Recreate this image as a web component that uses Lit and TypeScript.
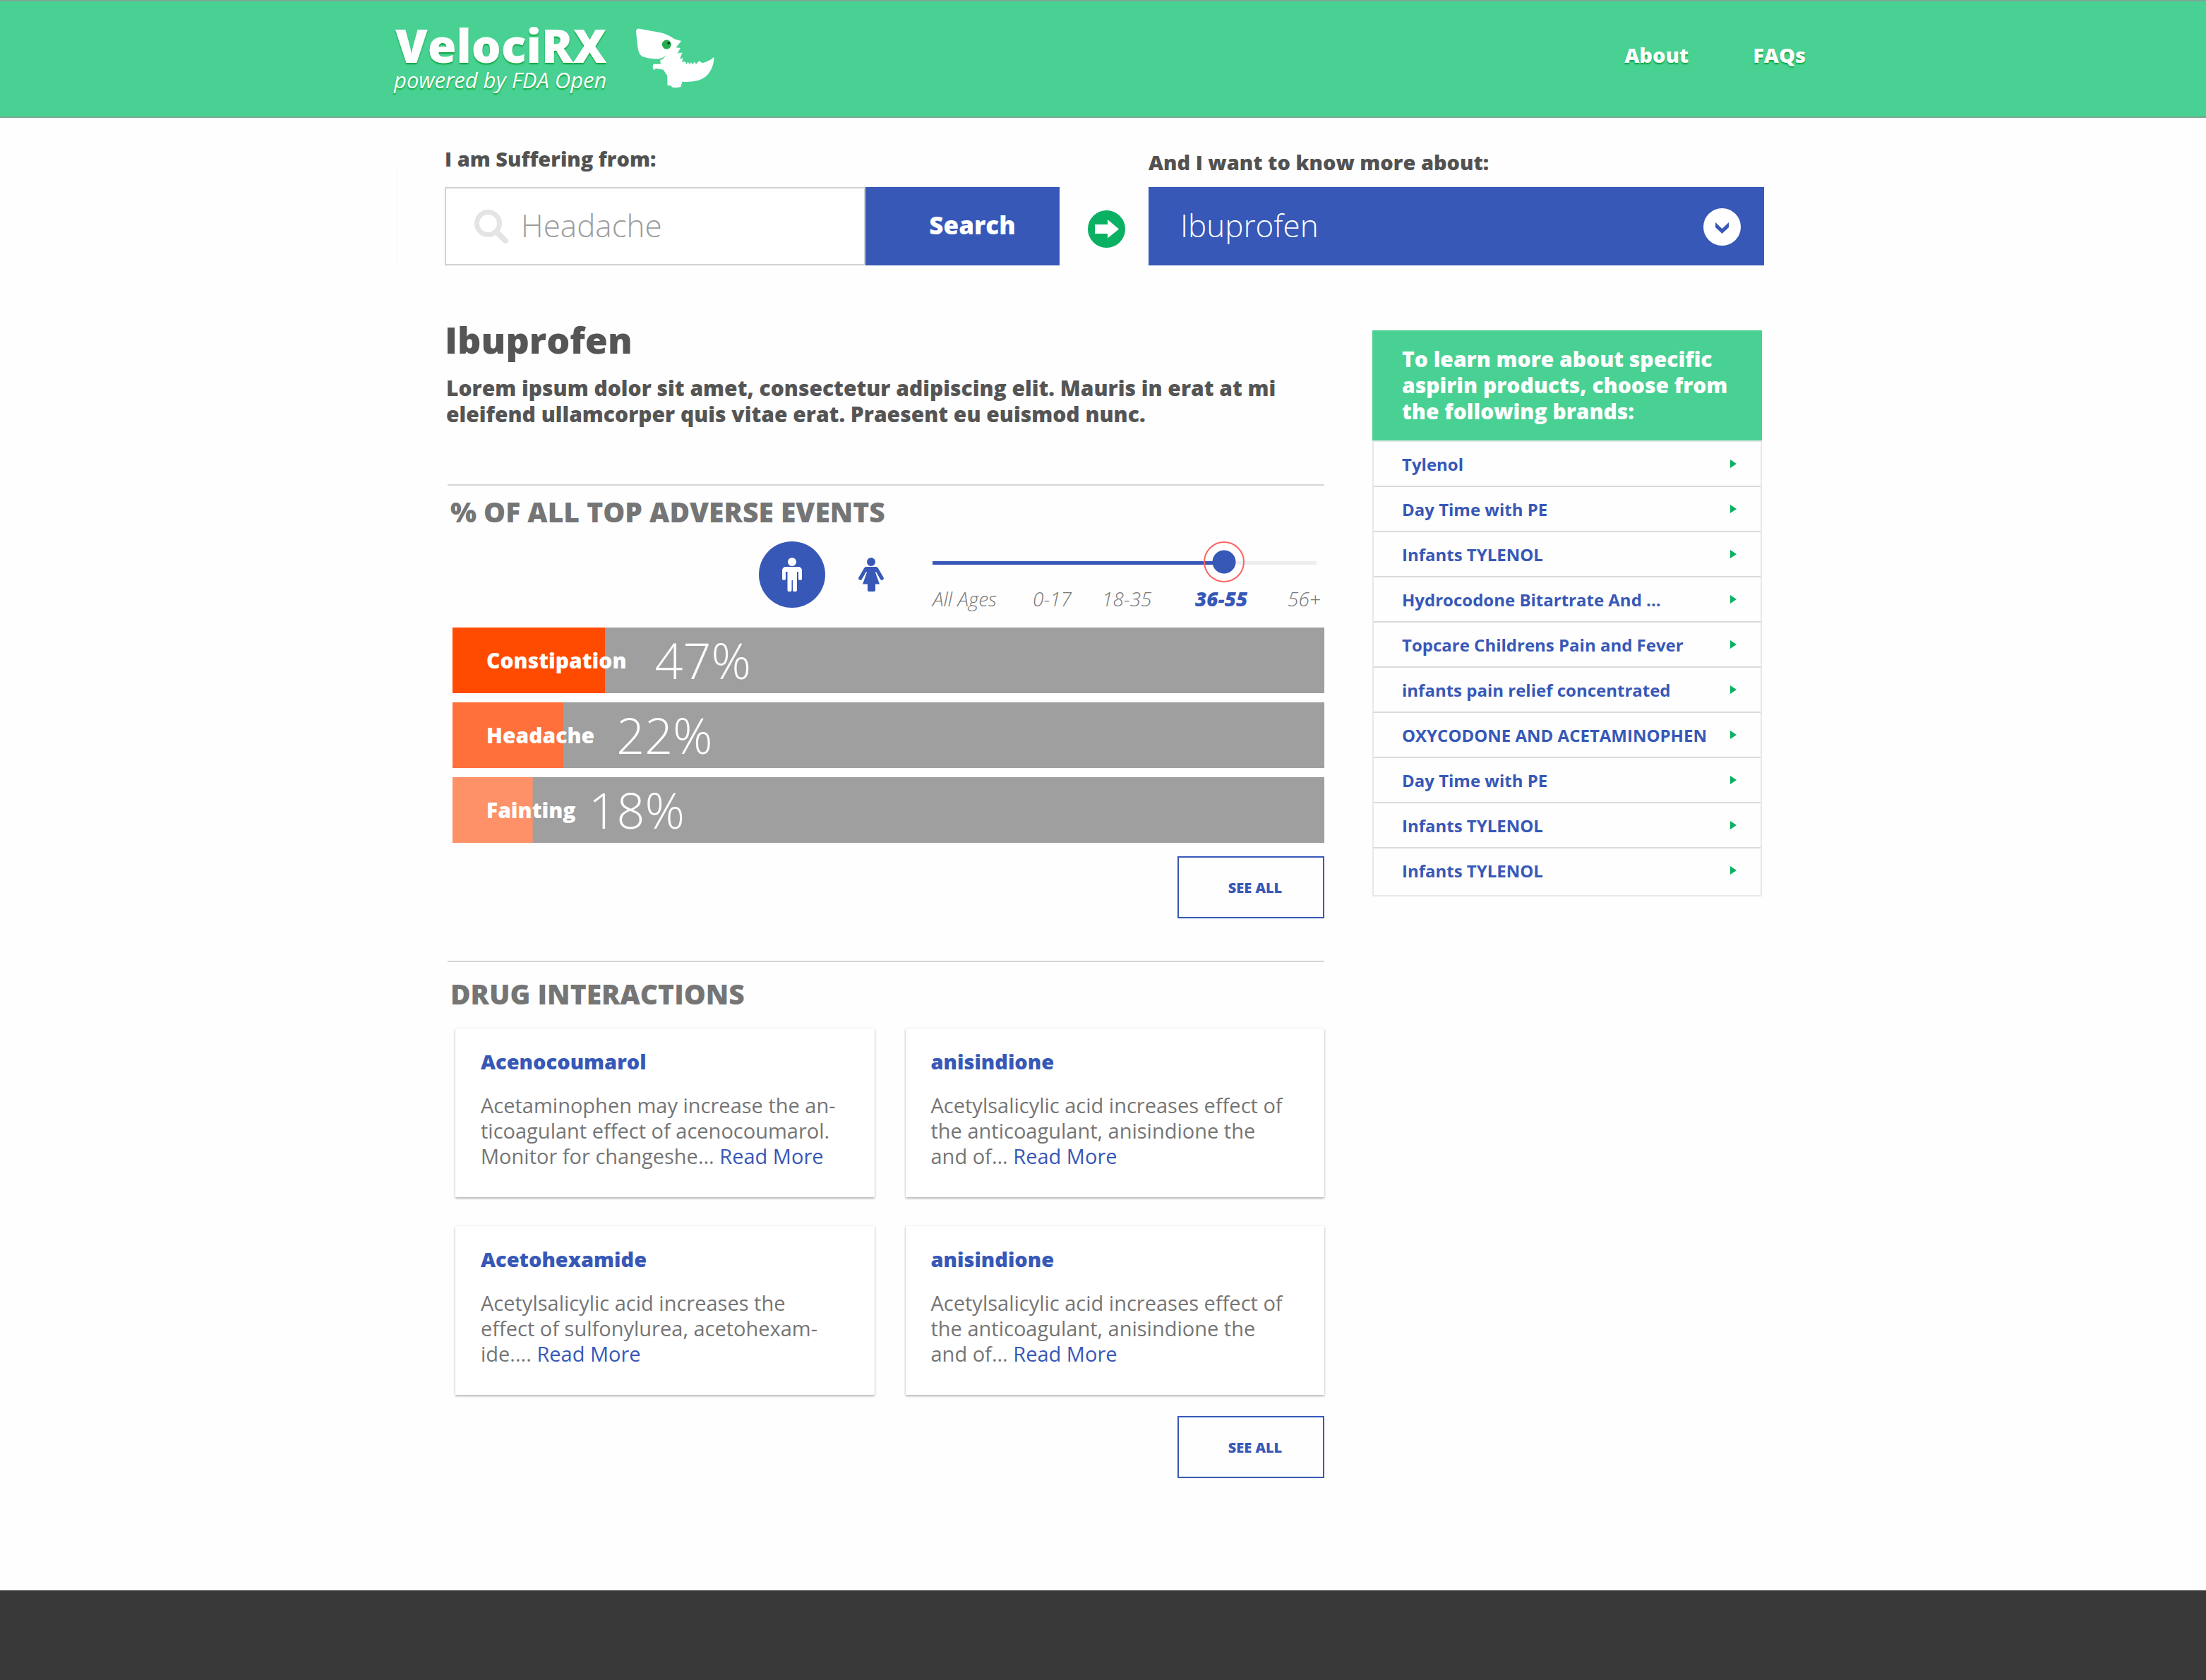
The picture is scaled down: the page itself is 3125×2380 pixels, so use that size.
import { LitElement, html, css, svg } from "lit";
import { customElement, state } from "lit/decorators.js";
import { styleMap } from "lit/directives/style-map.js";

interface AdverseEvent {
  name: string;
  percent: string;
  fill: string;
  valueAt: string;
  color: string;
}

interface Interaction {
  drug: string;
  lines: string[];
}

const EVENTS: AdverseEvent[] = [
  { name: "Constipation", percent: "47%", fill: "17.5%", valueAt: "23.2%", color: "#ff4b00" },
  { name: "Headache", percent: "22%", fill: "12.7%", valueAt: "18.8%", color: "#ff703b" },
  { name: "Fainting", percent: "18%", fill: "9.2%", valueAt: "15.6%", color: "#ff9168" },
];

const INTERACTIONS: Interaction[] = [
  {
    drug: "Acenocoumarol",
    lines: ["Acetaminophen may increase the an-", "ticoagulant effect of acenocoumarol.", "Monitor for changeshe..."],
  },
  {
    drug: "anisindione",
    lines: ["Acetylsalicylic acid increases effect of", "the anticoagulant, anisindione the", "and of..."],
  },
  {
    drug: "Acetohexamide",
    lines: ["Acetylsalicylic acid increases the", "effect of sulfonylurea, acetohexam-", "ide...."],
  },
  {
    drug: "anisindione",
    lines: ["Acetylsalicylic acid increases effect of", "the anticoagulant, anisindione the", "and of..."],
  },
];

const BRANDS = [
  "Tylenol",
  "Day Time with PE",
  "Infants TYLENOL",
  "Hydrocodone Bitartrate And ...",
  "Topcare Childrens Pain and Fever",
  "infants pain relief concentrated",
  "OXYCODONE AND ACETAMINOPHEN",
  "Day Time with PE",
  "Infants TYLENOL",
  "Infants TYLENOL",
];

const AGES = ["All Ages", "0-17", "18-35", "36-55", "56+"];

const raptor = svg`
  <path fill="#fff" d="M1113 132 Q1115 119 1126 120 L1215 136 Q1250 144 1278 165 L1306 172
    L1283 200 L1302 202 L1290 225 L1310 222 L1300 248 L1313 246 L1309 262 L1322 260 L1329 272
    L1333 262 L1344 273 L1346 262 L1355 273 L1361 261 L1370 271 L1381 258 L1397 266
    Q1425 259 1446 241 Q1443 300 1404 329 Q1370 350 1310 346 L1304 368 Q1285 374 1266 369
    L1263 363 L1247 362 L1246 320 L1229 295 L1196 290 L1190 297 Q1180 287 1187 271 L1218 271
    L1216 254 Q1232 250 1239 235 Q1223 250 1198 249 Q1160 247 1138 238 Q1122 226 1119 190 Z"/>
  <circle cx="1243.500" cy="187.500" r="19.500" fill="#22ad4b"/>
  <circle cx="1252" cy="182" r="5" fill="#222"/>`;

const man = svg`
  <circle cx="14" cy="6" r="6"/>
  <path d="M5 13h18a5 5 0 0 1 5 5v11.500a2.500 2.500 0 0 1-5 0V20h-2v25.500a3 3 0 0 1-6 0V32h-1.500v13.500a3 3 0 0 1-6 0V20H5v9.500a2.500 2.500 0 0 1-5 0V18a5 5 0 0 1 5-5z"/>`;

const woman = svg`
  <circle cx="18" cy="6" r="6"/>
  <path d="M11 13h14q2 0 3 2l7.500 13a2.500 2.500 0 0 1-4.500 2.500L25 20l-1 1 6 16.500h-6V46a2 2 0 0 1-2 2h-7a2 2 0 0 1-2-2v-8.500H6L12 21l-1-1-6 10.500A2.500 2.500 0 0 1 .5 28L8 15q1-2 3-2z"/>`;

@customElement("app-root")
export class AppRoot extends LitElement {
  @state() private sex = "male";
  @state() private age = 79;

  static styles = css`
    :host {
      --blue: #3758b7;
      --green: #49d193;
      --rule: #d4d5d6;
      display: flex;
      flex-direction: column;
      min-height: 100vh;
      background: #fefefe;
      color: #555;
      font-family: "Open Sans", sans-serif;
      font-size: 30px;
    }
    * { box-sizing: border-box; }
    h1, h2, h3, p, ul { margin: 0; padding: 0; }
    ul { list-style: none; }
    a { color: inherit; text-decoration: none; }
    button, input, select { font-family: inherit; margin: 0; border: 0; border-radius: 0; }
    svg { display: block; flex: none; }

    .header {
      background: var(--green);
      border: solid #79a792;
      border-width: 2px 0;
    }
    .bar {
      display: flex;
      align-items: flex-start;
      max-width: 2009px;
      min-height: 163px;
      margin: 0 auto;
      padding: 28px 9px 0 0;
      color: #fff;
      text-shadow: 0 2px 2px #0ca53a;
    }
    .brand { display: flex; flex-direction: column; align-items: flex-end; }
    .name { font-size: 66px; line-height: 66px; font-weight: 800; }
    .tag { font-size: 31px; line-height: 34px; font-style: italic; }
    .raptor { width: 111px; height: 85px; margin: 10px 0 0 42px; }
    .nav { display: flex; gap: 91px; margin: 28px 0 0 auto; font-size: 29px; line-height: 40px; font-weight: 800; }

    .main {
      width: 100%;
      max-width: 2009px;
      margin: 0 auto;
      padding-bottom: 159px;
    }
    .search {
      display: grid;
      grid-template-columns: minmax(0, 871fr) 126px minmax(0, 872fr);
      align-items: end;
      margin-left: 4px;
      padding: 38px 68px 0;
      background: linear-gradient(#f6f6f6, #f6f6f6) no-repeat left bottom / 1px 147px;
    }
    .label { display: block; margin-bottom: 20px; font-size: 29px; line-height: 40px; font-weight: 800; color: #525252; }
    .label.low { margin-bottom: 15px; }
    .form { display: flex; height: 111px; }
    .box {
      display: flex;
      flex: 1;
      align-items: center;
      gap: 18px;
      min-width: 0;
      padding-left: 40px;
      border: 2px solid #d0d1d2;
      background: #fff;
    }
    .term {
      flex: 1;
      min-width: 0;
      height: 100%;
      padding: 0 0 4px;
      background: none;
      color: #9c9c9c;
      font-size: 44px;
      font-weight: 300;
    }
    .go {
      width: 275px;
      padding: 0 0 4px 28px;
      background: var(--blue);
      color: #fff;
      font-size: 35px;
      font-weight: 800;
    }
    .arrow { margin: 0 33px 25px 40px; }
    .picker { position: relative; }
    .drug {
      display: block;
      width: 100%;
      height: 111px;
      padding: 0 100px 4px 45px;
      appearance: none;
      background: var(--blue);
      color: #fff;
      font-size: 44px;
      font-weight: 300;
    }
    .chevron { position: absolute; top: 30px; right: 33px; pointer-events: none; }

    .columns {
      display: grid;
      grid-template-columns: minmax(0, 1fr) 552px;
      align-items: start;
      gap: 68px;
      margin-top: 75px;
      padding: 0 71px 0 72px;
    }
    .title { font-size: 52px; line-height: 60px; font-weight: 800; }
    .intro { margin-top: 20px; padding-left: 2px; line-height: 37px; font-weight: 800; }
    .section { margin-left: 4px; border-top: 2px solid var(--rule); }
    .events { margin-top: 81px; padding-top: 17px; }
    .drugs { margin-top: 60px; padding-top: 25px; }
    .heading { padding-left: 4px; font-size: 39px; line-height: 40px; font-weight: 800; color: #757575; }

    .filters { display: flex; justify-content: flex-end; align-items: flex-start; margin: 22px 0 25px; }
    .sexes { display: flex; gap: 18px; margin-right: 40px; }
    .sex {
      display: grid;
      place-items: center;
      width: 94px;
      height: 94px;
      padding: 0;
      border-radius: 50%;
      background: none;
      color: var(--blue);
      fill: currentColor;
    }
    .sex[aria-pressed="true"] { background: var(--blue); color: #fff; }
    .ages { width: 555px; }
    .range {
      display: block;
      width: 544px;
      height: 58px;
      appearance: none;
      background:
        linear-gradient(var(--blue), var(--blue)) no-repeat 0 28px / 76% 5px,
        linear-gradient(#eceef0, #eceef0) no-repeat 0 28px / 100% 5px;
    }
    .range::-webkit-slider-runnable-track { height: 58px; }
    .range::-webkit-slider-thumb {
      appearance: none;
      width: 58px;
      height: 58px;
      border: 2px solid #ff6464;
      border-radius: 50%;
      background: radial-gradient(circle, var(--blue) 16px, transparent 17px);
    }
    .marks {
      display: grid;
      grid-template-columns: 142fr 98fr 132fr 131fr 52fr;
      margin-top: 7px;
      font-size: 28px;
      line-height: 32px;
      font-style: italic;
      font-weight: 300;
      color: #777;
      white-space: nowrap;
    }
    .mark.on { color: var(--blue); font-weight: 800; }

    .bars { display: grid; gap: 13px; margin-left: 7px; }
    .event {
      display: grid;
      align-items: center;
      height: 93px;
      background-color: #9f9f9f;
      background-repeat: no-repeat;
      color: #fff;
      white-space: nowrap;
    }
    .event-name { padding-left: 48px; font-weight: 800; }
    .event-value { font-size: 70px; line-height: 93px; font-weight: 300; }
    .all {
      display: block;
      width: 208px;
      height: 88px;
      margin: 19px 0 0 auto;
      padding: 0 0 0 12px;
      border: 2px solid var(--blue);
      background: none;
      color: var(--blue);
      font-size: 20px;
      font-weight: 800;
    }
    .drugs .all { margin-top: 30px; }

    .cards {
      display: grid;
      grid-template-columns: 1fr 1fr;
      gap: 41px 44px;
      margin: 29px 0 0 11px;
    }
    .card {
      padding: 27px 36px 40px;
      background: #fff;
      box-shadow: 0 2px 3px rgba(0, 0, 0, 0.26), 0 0 3px rgba(0, 0, 0, 0.1);
      color: #757575;
    }
    .card-title { font-size: 29px; line-height: 40px; font-weight: 800; color: var(--blue); }
    .card-text { margin-top: 24px; font-size: 29px; line-height: 36px; }
    .more { color: var(--blue); }

    .side { margin-top: 17px; }
    .side-title {
      padding: 22px 42px 23px;
      background: var(--green);
      color: #fff;
      font-size: 30px;
      line-height: 37px;
      font-weight: 800;
    }
    .brands { padding-bottom: 4px; border: 2px solid #e8e8e8; }
    .brand-row + .brand-row { border-top: 2px solid #dadada; }
    .brand-link {
      display: flex;
      align-items: center;
      justify-content: space-between;
      height: 62px;
      padding: 0 34px 0 40px;
      color: var(--blue);
      font-size: 24px;
      font-weight: 700;
    }

    .footer { flex: 1 0 127px; background: #393939; }

    @media (max-width: 1800px) {
      .search { grid-template-columns: 1fr; gap: 20px; padding: 38px 24px 0; }
      .columns { grid-template-columns: 1fr; padding: 0 24px; }
      .bar { padding-left: 24px; }
    }
  `;

  private markIndex() {
    return Math.min(AGES.length - 1, Math.floor(this.age / 25));
  }

  render() {
    return html`
      <header class="header">
        <div class="bar">
          <a class="brand" href="#">
            <span class="name">VelociRX</span>
            <span class="tag">powered by FDA Open</span>
          </a>
          <svg class="raptor" viewBox="1113 119 334 254" aria-hidden="true">${raptor}</svg>
          <nav class="nav">
            <a href="#about">About</a>
            <a href="#faqs">FAQs</a>
          </nav>
        </div>
      </header>

      <main class="main">
        <section class="search">
          <div>
            <label class="label" for="term">I am Suffering from:</label>
            <form class="form" @submit=${(e: Event) => e.preventDefault()}>
              <div class="box">
                <svg width="48" height="48" viewBox="0 0 48 48" fill="none" stroke="#e4e4e4" aria-hidden="true">
                  <circle cx="19.500" cy="19.500" r="16" stroke-width="7" />
                  <path d="M32 32L44 44" stroke-width="8" stroke-linecap="round" />
                </svg>
                <input class="term" id="term" type="text" value="Headache" />
              </div>
              <button class="go" type="submit">Search</button>
            </form>
          </div>
          <svg class="arrow" width="53" height="53" viewBox="0 0 53 53" aria-hidden="true">
            <circle cx="26.500" cy="26.500" r="26.500" fill="#0bb162" />
            <path fill="#fff" d="M10 20H28V13L44 26.500L28 39.500V33H10Z" />
          </svg>
          <div>
            <label class="label low" for="drug">And I want to know more about:</label>
            <div class="picker">
              <select class="drug" id="drug">
                <option>Ibuprofen</option>
              </select>
              <svg class="chevron" width="53" height="53" viewBox="0 0 53 53" aria-hidden="true">
                <circle cx="26.500" cy="26.500" r="26.500" fill="#fff" />
                <path fill="#3758b7" d="M17 20L26.500 29L36 20V27L26.500 36L17 27Z" />
              </svg>
            </div>
          </div>
        </section>

        <div class="columns">
          <div>
            <h1 class="title">Ibuprofen</h1>
            <p class="intro">
              Lorem ipsum dolor sit amet, consectetur adipiscing elit. Mauris in erat at mi
              eleifend ullamcorper quis vitae erat. Praesent eu euismod nunc.
            </p>

            <section class="section events">
              <h2 class="heading">% OF ALL TOP ADVERSE EVENTS</h2>
              <div class="filters">
                <div class="sexes">
                  <button class="sex" aria-label="Male" aria-pressed=${this.sex === "male"}
                    @click=${() => (this.sex = "male")}>
                    <svg width="28" height="48" viewBox="0 0 28 48">${man}</svg>
                  </button>
                  <button class="sex" aria-label="Female" aria-pressed=${this.sex === "female"}
                    @click=${() => (this.sex = "female")}>
                    <svg width="36" height="48" viewBox="0 0 36 48">${woman}</svg>
                  </button>
                </div>
                <div class="ages">
                  <input class="range" type="range" min="0" max="100" aria-label="Age group"
                    .value=${String(this.age)}
                    style=${styleMap({ backgroundSize: `${this.age - 3}% 5px, 100% 5px` })}
                    @input=${(e: Event) => (this.age = Number((e.target as HTMLInputElement).value))} />
                  <div class="marks">
                    ${AGES.map((a, i) => html`<span class="mark ${i === this.markIndex() ? "on" : ""}">${a}</span>`)}
                  </div>
                </div>
              </div>
              <div class="bars">
                ${EVENTS.map(
                  (e) => html`
                    <div class="event" style=${styleMap({
                      gridTemplateColumns: `${e.valueAt} 1fr`,
                      backgroundImage: `linear-gradient(${e.color}, ${e.color})`,
                      backgroundSize: `${e.fill} 100%`,
                    })}>
                      <span class="event-name">${e.name}</span>
                      <span class="event-value">${e.percent}</span>
                    </div>`
                )}
              </div>
              <button class="all">SEE ALL</button>
            </section>

            <section class="section drugs">
              <h2 class="heading">DRUG INTERACTIONS</h2>
              <div class="cards">
                ${INTERACTIONS.map(
                  (c) => html`
                    <article class="card">
                      <h3 class="card-title">${c.drug}</h3>
                      <p class="card-text">
                        ${c.lines[0]}<br />${c.lines[1]}<br />${c.lines[2]}
                        <a class="more" href="#more">Read More</a>
                      </p>
                    </article>`
                )}
              </div>
              <button class="all">SEE ALL</button>
            </section>
          </div>

          <aside class="side">
            <h2 class="side-title">To learn more about specific aspirin products, choose from the following brands:</h2>
            <ul class="brands">
              ${BRANDS.map(
                (b) => html`
                  <li class="brand-row">
                    <a class="brand-link" href="#brand">
                      <span>${b}</span>
                      <svg width="9" height="12" viewBox="0 0 9 12" aria-hidden="true">
                        <path fill="#0bb162" d="M0 0L9 6L0 12Z" />
                      </svg>
                    </a>
                  </li>`
              )}
            </ul>
          </aside>
        </div>
      </main>
      <footer class="footer"></footer>
    `;
  }
}
